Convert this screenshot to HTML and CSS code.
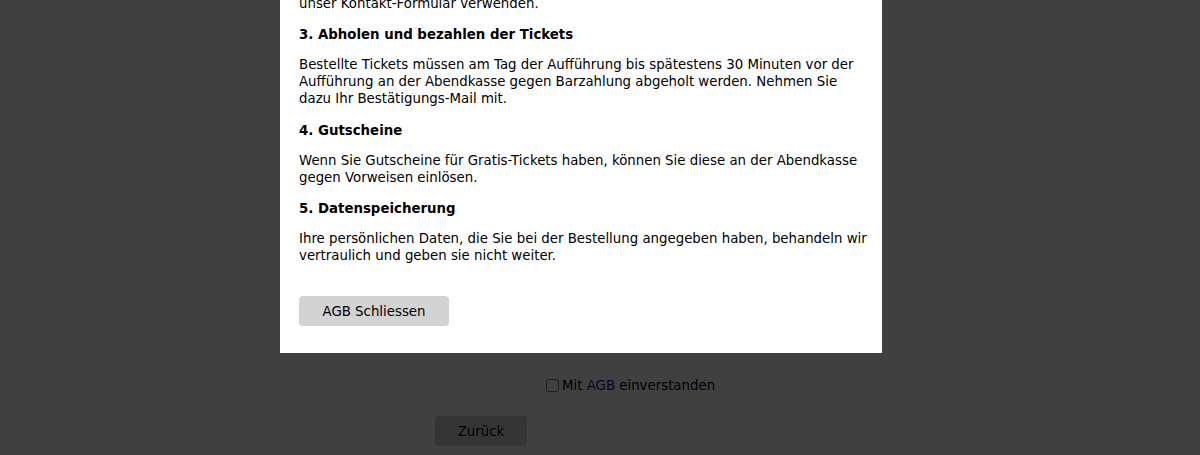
FILE: index.html
```html
<!DOCTYPE html>
<html lang="de">
<head>
<meta charset="utf-8">
<title>AGB</title>
<link rel="stylesheet" href="styles.css">
</head>
<body>
<div class="page">
  <label class="agree"><input type="checkbox" class="box"><span>Mit <a href="#" class="link">AGB</a> einverstanden</span></label>
  <div class="nav">
    <button class="back">Zurück</button>
  </div>
</div>
<div class="overlay"></div>
<div class="modal">
  <h3>2. Bestellung</h3>
  <p>Bei Fragen zu Ihrer Bestellung können Sie uns jederzeit per E-Mail kontaktieren oder unser Kontakt-Formular verwenden.</p>
  <h3>3. Abholen und bezahlen der Tickets</h3>
  <p class="wide">Bestellte Tickets müssen am Tag der Aufführung bis spätestens 30 Minuten vor der Aufführung an der Abendkasse gegen Barzahlung abgeholt werden. Nehmen Sie dazu Ihr Bestätigungs-Mail mit.</p>
  <h3>4. Gutscheine</h3>
  <p>Wenn Sie Gutscheine für Gratis-Tickets haben, können Sie diese an der Abendkasse gegen Vorweisen einlösen.</p>
  <h3>5. Datenspeicherung</h3>
  <p class="last">Ihre persönlichen Daten, die Sie bei der Bestellung angegeben haben, behandeln wir vertraulich und geben sie nicht weiter.</p>
  <div class="actions">
    <button class="close">AGB Schliessen</button>
  </div>
</div>
</body>
</html>
```
FILE: styles.css
```css
html, body {
  margin: 0;
  padding: 0;
  background: #ffffff;
}
body {
  font-family: "DejaVu Sans", Verdana, sans-serif;
  font-size: 13.33px;
  color: #000;
  height: 455px;
  overflow: hidden;
}
.page {
  padding-top: 377px;
  display: flex;
  flex-direction: column;
}
.agree {
  display: flex;
  align-items: center;
  margin-left: 546px;
  line-height: 17px;
}
.box {
  margin: 0 3px 0 0;
  width: 13px;
  height: 13px;
}
.link {
  color: #1a1aa6;
  text-decoration: none;
}
.nav {
  margin-top: 22px;
  padding-left: 435px;
}
.back {
  width: 92px;
  height: 30px;
  border: none;
  border-radius: 4px;
  background: #d3d3d3;
  font-family: inherit;
  font-size: 13.33px;
  color: #000;
  padding: 1px 0 0 0;
}
.overlay {
  position: fixed;
  inset: 0;
  background: rgba(0, 0, 0, 0.75);
}
.modal {
  position: fixed;
  left: 280px;
  width: 602px;
  bottom: 102px;
  box-sizing: border-box;
  background: #fff;
  padding: 0 19px 27px 19px;
  line-height: 17px;
}
.modal h3 {
  font-size: 13.33px;
  font-weight: bold;
  margin: 13px 0;
}
.modal p {
  margin: 13px 0 14px 0;
}
.modal p.wide {
  margin-bottom: 15px;
}
.modal p.last {
  margin-right: -8px;
}
.actions {
  margin-top: 32px;
}
.close {
  width: 150px;
  height: 30px;
  border: none;
  border-radius: 4px;
  background: #d3d3d3;
  font-family: inherit;
  font-size: 13.33px;
  color: #000;
  padding: 0;
}
```
